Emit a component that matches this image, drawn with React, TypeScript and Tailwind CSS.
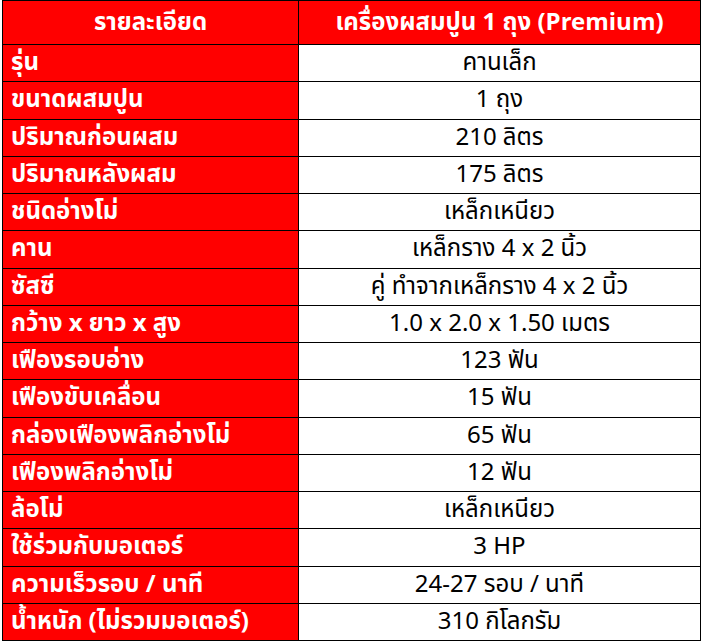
const rows: [string, string][] = [
  ["รุ่น", "คานเล็ก"],
  ["ขนาดผสมปูน", "1 ถุง"],
  ["ปริมาณก่อนผสม", "210 ลิตร"],
  ["ปริมาณหลังผสม", "175 ลิตร"],
  ["ชนิดอ่างโม่", "เหล็กเหนียว"],
  ["คาน", "เหล็กราง 4 x 2 นิ้ว"],
  ["ซัสซี", "คู่ ทำจากเหล็กราง 4 x 2 นิ้ว"],
  ["กว้าง x ยาว x สูง", "1.0 x 2.0 x 1.50 เมตร"],
  ["เฟืองรอบอ่าง", "123 ฟัน"],
  ["เฟืองขับเคลื่อน", "15 ฟัน"],
  ["กล่องเฟืองพลิกอ่างโม่", "65 ฟัน"],
  ["เฟืองพลิกอ่างโม่", "12 ฟัน"],
  ["ล้อโม่", "เหล็กเหนียว"],
  ["ใช้ร่วมกับมอเตอร์", "3 HP"],
  ["ความเร็วรอบ / นาที", "24-27 รอบ / นาที"],
  ["น้ำหนัก (ไม่รวมมอเตอร์)", "310 กิโลกรัม"],
];

export default function App() {
  return (
    <div className="min-h-screen bg-white pl-[2px] font-['Noto_Sans_Thai','Noto_Sans',sans-serif]">
      <table className="w-[699px] table-fixed border-collapse text-[24px] leading-none">
        <colgroup>
          <col className="w-[296px]" />
          <col />
        </colgroup>
        <thead>
          <tr className="h-[44px] bg-[#ff0000] text-white">
            <th className="border border-black font-bold">รายละเอียด</th>
            <th className="border border-black font-bold">เครื่องผสมปูน 1 ถุง (Premium)</th>
          </tr>
        </thead>
        <tbody>
          {rows.map(([label, value]) => (
            <tr key={label} className="h-[37.25px]">
              <td className="border border-black bg-[#ff0000] px-2 text-left font-bold text-white">
                {label}
              </td>
              <td className="border border-black bg-white text-center text-black">{value}</td>
            </tr>
          ))}
        </tbody>
      </table>
    </div>
  );
}
